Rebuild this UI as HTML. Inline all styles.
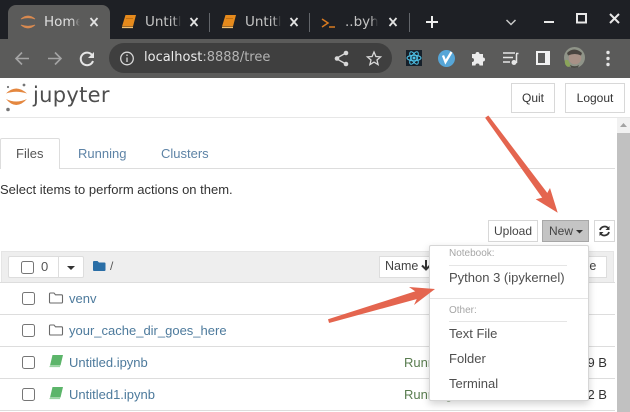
<!DOCTYPE html>
<html>
<head>
<meta charset="utf-8">
<style>
html,body{margin:0;padding:0;background:#fff;}
body{width:630px;height:412px;overflow:hidden;position:relative;font-family:"Liberation Sans",sans-serif;}
#w{position:absolute;left:0;top:0;width:630px;height:412px;overflow:hidden;filter:blur(.3px);background:#fff;}
.a{position:absolute;white-space:nowrap;}
.b{position:absolute;box-sizing:border-box;}
.btn{position:absolute;box-sizing:border-box;border:1px solid #d8d8d8;background:#fff;color:#333;font-size:12px;text-align:center;}
.cb{position:absolute;box-sizing:border-box;width:13px;height:13px;border:1px solid #767676;border-radius:2.5px;background:#fff;}
.lnk{color:#4d7a9c;font-size:13px;}
.hr{position:absolute;left:0;width:615px;height:1px;background:#ddd;}
.mi{position:absolute;left:449px;color:#4f4f4f;font-size:13px;white-space:nowrap;}
.mh{position:absolute;left:449px;color:#a6a6a6;font-size:10px;white-space:nowrap;}
.tt{font-family:'DejaVu Sans',sans-serif;font-size:13.5px;top:14px;width:36px;overflow:hidden;color:#c4c4c4;-webkit-mask-image:linear-gradient(90deg,#000 78%,transparent 100%);mask-image:linear-gradient(90deg,#000 78%,transparent 100%);}
svg{position:absolute;overflow:visible;}
</style>
</head>
<body>
<div id="w">
<!-- browser chrome -->
<div class="b" style="left:0;top:0;width:630px;height:39px;background:#1e2025;"></div>
<div class="b" style="left:0;top:39px;width:630px;height:39px;background:#5b5b5a;"></div>
<div class="b" style="left:8px;top:5px;width:102px;height:36px;background:#5b5b5a;border-radius:8px 8px 0 0;"></div>

<svg style="left:0;top:0" width="630" height="78" viewBox="0 0 630 78">
  <path d="M21 19Q28 13 35 19Q28 16.500 21 19Z" fill="#d98a50" stroke="#d98a50" stroke-width=".8"/>
  <path d="M21 25Q28 31 35 25Q28 27.500 21 25Z" fill="#d98a50" stroke="#d98a50" stroke-width=".8"/>
  <g stroke="#e2e2e2" stroke-width="1.800" fill="none">
    <path d="M90.500 18l7 8M97.500 18l-7 8"/>
    <path d="M190.500 18l7 8M197.500 18l-7 8"/>
    <path d="M290.500 18l7 8M297.500 18l-7 8"/>
    <path d="M389.500 18l7 8M396.500 18l-7 8"/>
  </g>
  <path d="M209.500 13v19M309.500 13v19M409.500 13v19" stroke="#62656a" stroke-width="1"/>
  <g fill="#e68a1c">
    <path d="M125.500 15h10.500l-3 11.500h-11z"/>
    <path d="M225.500 15h10.500l-3 11.500h-11z"/>
  </g>
  <path d="M122 27.500h11M222 27.500h11" stroke="#f4c070" stroke-width="1.200"/>
  <path d="M126 18.500h7M226 18.500h7" stroke="#b86a10" stroke-width=".8"/>
  <path d="M322 19l6 4-6 4M329 27h6" fill="none" stroke="#d97a20" stroke-width="1.500"/>
  <path d="M426 22h12M432 16v12" stroke="#eee" stroke-width="2" fill="none"/>
  <path d="M506.500 20l4.500 4.500 4.500-4.500" stroke="#c8c8c8" stroke-width="1.500" fill="none"/>
  <path d="M544 22h10" stroke="#e8e8e8" stroke-width="2"/>
  <rect x="577" y="14" width="9" height="8.500" fill="none" stroke="#e8e8e8" stroke-width="2"/>
  <path d="M610 14l9 9M619 14l-9 9" stroke="#e8e8e8" stroke-width="2"/>
  <!-- nav -->
  <path d="M29 58.500H16M22 52.500l-6 6 6 6" fill="none" stroke="#a4a4a4" stroke-width="1.600"/>
  <path d="M48 58.500H61M55 52.500l6 6-6 6" fill="none" stroke="#a4a4a4" stroke-width="1.600"/>
  <path d="M92 55A6.300 6.300 0 1 0 93 61" fill="none" stroke="#e6e6e6" stroke-width="2"/>
  <path d="M94 52v6h-6z" fill="#e6e6e6"/>
  <!-- address bar -->
  <rect x="109" y="43" width="283" height="30" rx="15" fill="#3f3f3f"/>
  <circle cx="127" cy="58.500" r="6.300" fill="none" stroke="#d8d8d8" stroke-width="1.300"/>
  <path d="M127 57.500v4.500M127 54.500v1.500" stroke="#d8d8d8" stroke-width="1.300"/>
  <!-- share / star -->
  <g fill="none" stroke="#d8d8d8" stroke-width="1.300">
    <path d="M346 53l-10 5.500 10 5.500"/>
    <path d="M374 52l1.900 4.500 4.700.4-3.600 3.100 1.100 4.600-4.100-2.500-4.100 2.500 1.100-4.600-3.600-3.100 4.700-.4z"/>
  </g>
  <g fill="#d8d8d8"><circle cx="346" cy="53" r="2.300"/><circle cx="337" cy="58.500" r="2.300"/><circle cx="346" cy="64" r="2.300"/></g>
  <!-- react ext -->
  <rect x="406" y="50" width="16" height="16" fill="#16202a"/>
  <g fill="none" stroke="#4fc3e8" stroke-width="1">
    <ellipse cx="414" cy="58" rx="7" ry="2.800"/>
    <ellipse cx="414" cy="58" rx="7" ry="2.800" transform="rotate(60 414 58)"/>
    <ellipse cx="414" cy="58" rx="7" ry="2.800" transform="rotate(120 414 58)"/>
  </g>
  <circle cx="414" cy="58" r="1.500" fill="#4fc3e8"/>
  <!-- v ext -->
  <circle cx="446.500" cy="58.500" r="8.500" fill="#56a6d8"/>
  <path d="M443 55.500l2.500 6.500 6-10" fill="none" stroke="#fff" stroke-width="2.300"/>
  <!-- puzzle -->
  <path d="M472 54h3.500a2 2 0 1 1 4 0H483v3.500a2 2 0 1 1 0 4V65.500h-3.500a2 2 0 1 0-4 0h-3.500v-3.500a2 2 0 1 0 0-4z" fill="#ececec"/>
  <!-- playlist -->
  <path d="M503 53h12M503 57.500h10M503 62h7" stroke="#e6e6e6" stroke-width="1.500"/>
  <path d="M516.500 54v9" stroke="#e6e6e6" stroke-width="1.500"/>
  <path d="M516 53.500h2.500" stroke="#e6e6e6" stroke-width="1.500"/>
  <circle cx="514" cy="62.500" r="2.500" fill="#e6e6e6"/>
  <!-- sidebar -->
  <rect x="536" y="51" width="14" height="14" fill="#f2f2f2"/>
  <rect x="538" y="53" width="7" height="10" fill="#5b5b5a"/>
  <!-- avatar -->
  <circle cx="574.500" cy="57.500" r="10.500" fill="#8f9488"/>
  <circle cx="575" cy="58" r="6.300" fill="#a89186"/>
  <path d="M567 53q7-7 15 0l-1 2.500q-6-3-13 0z" fill="#4a4540"/>
  <path d="M565 60q-1 5 3 7l3-1-3-6z" fill="#8ba55a"/>
  <path d="M570 65q5 2.500 9 0l-1 2.500q-4 1-7 0z" fill="#4b4b45"/>
  <!-- menu dots -->
  <g fill="#e6e6e6"><circle cx="608" cy="52.500" r="1.700"/><circle cx="608" cy="58.500" r="1.700"/><circle cx="608" cy="64.500" r="1.700"/></g>
</svg>

<div class="a tt" style="left:44px;color:#dfdfdf;">Home</div>
<div class="a tt" style="left:145px;">Untitled</div>
<div class="a tt" style="left:245px;">Untitled</div>
<div class="a tt" style="left:345px;width:33px;">..byhelp</div>
<div class="a" style="left:144px;top:50px;font-size:13px;color:#ececec;font-family:'DejaVu Sans',sans-serif;">localhost<span style="color:#b4b4b4">:8888/tree</span></div>

<!-- jupyter header -->
<svg style="left:0;top:78px" width="40" height="36" viewBox="0 0 40 36">
  <path d="M6 15.500Q16 5.500 27 15.500Q16 12 6 15.500Z" fill="#e4873f"/>
  <path d="M6 21Q16 33 27 21Q16 26 6 21Z" fill="#e4873f"/>
  <circle cx="24" cy="7" r="1.400" fill="#767677"/>
  <circle cx="8" cy="9" r="1.100" fill="#767677"/>
  <circle cx="8" cy="31.500" r="1.800" fill="#767677"/>
</svg>
<div class="a" style="left:33px;top:83px;color:#4e4e4e;font-family:'DejaVu Sans',sans-serif;font-size:21px;letter-spacing:.3px;">jupyter</div>
<div class="btn" style="left:511px;top:83px;width:44px;height:30px;line-height:28px;">Quit</div>
<div class="btn" style="left:565px;top:83px;width:60px;height:30px;line-height:28px;">Logout</div>
<div class="b" style="left:0;top:117px;width:630px;height:1px;background:#e7e7e7;"></div>

<!-- scrollbar -->
<div class="b" style="left:617px;top:118px;width:13px;height:294px;background:#f1f1f1;"></div>
<div class="b" style="left:617px;top:133px;width:13px;height:279px;background:#c1c1c1;"></div>
<svg style="left:617px;top:118px" width="13" height="15"><path d="M3 9l3.500-4 3.500 4z" fill="#a3a3a3"/></svg>

<!-- tabs -->
<div class="b" style="left:0;top:168px;width:615px;height:1px;background:#ddd;"></div>
<div class="b" style="left:0;top:138px;width:60px;height:31px;background:#fff;border:1px solid #ddd;border-bottom:0;border-radius:2px 2px 0 0;"></div>
<div class="a" style="left:16px;top:146px;font-size:13px;color:#555;">Files</div>
<div class="a" style="left:78px;top:146px;font-size:13px;color:#5d83a6;">Running</div>
<div class="a" style="left:161px;top:146px;font-size:13px;color:#5d83a6;">Clusters</div>

<div class="a" style="left:0;top:182px;font-size:13px;color:#333;">Select items to perform actions on them.</div>

<!-- buttons -->
<div class="btn" style="left:488px;top:220px;width:50px;height:22px;line-height:20px;color:#444;">Upload</div>
<div class="btn" style="left:542px;top:220px;width:47px;height:22px;line-height:20px;background:#c4c4c4;border-color:#a8a8a8;color:#444;text-align:left;padding-left:6px;">New</div>
<svg style="left:0;top:0" width="630" height="412"><path d="M576 230h7l-3.500 3.500z" fill="#333"/></svg>
<div class="btn" style="left:594px;top:220px;width:21px;height:22px;"></div>
<svg style="left:594px;top:220px" width="22" height="22" viewBox="0 0 22 22">
  <path d="M6 10A4.800 4.800 0 0 1 14.500 8.500M15 12A4.800 4.800 0 0 1 6.500 13.500" fill="none" stroke="#333" stroke-width="1.800"/>
  <path d="M15.500 6v4h-4zM5.500 16v-4h4z" fill="#333"/>
</svg>

<!-- list header -->
<div class="b" style="left:1px;top:251px;width:613px;height:32px;background:#eee;border:1px solid #e5e5e5;border-bottom:1px solid #ddd;"></div>
<div class="b" style="left:8px;top:256px;width:76px;height:22px;background:#fff;border:1px solid #ddd;border-radius:2px;"></div>
<div class="b" style="left:58px;top:256px;width:1px;height:22px;background:#ddd;"></div>
<div class="cb" style="left:21px;top:261px;"></div>
<div class="a" style="left:41px;top:259px;font-size:13px;color:#555;">0</div>
<svg style="left:0;top:0" width="630" height="412">
  <path d="M67 266h8l-4 4z" fill="#333"/>
  <path d="M93 262a1 1 0 0 1 1-1h3.500l1.500 1.500h5.500a1 1 0 0 1 1 1V270a1 1 0 0 1-1 1H94a1 1 0 0 1-1-1z" fill="#2a6ea6"/>
</svg>
<div class="a" style="left:110px;top:259px;font-size:12px;color:#555;">/</div>

<div class="b" style="left:379px;top:256px;width:60px;height:22px;background:#fff;border:1px solid #ddd;"></div>
<div class="a" style="left:385px;top:259px;font-size:12.500px;color:#444;">Name</div>
<svg style="left:420px;top:259px" width="12" height="14"><path d="M6 1v9M2 6.500l4 4 4-4" fill="none" stroke="#333" stroke-width="2"/></svg>
<div class="b" style="left:565px;top:256px;width:42px;height:22px;background:#fff;border:1px solid #ddd;"></div>
<div class="a" style="left:572px;top:259px;font-size:12.500px;color:#444;">Size</div>

<!-- rows -->
<div class="hr" style="top:282px;"></div>
<div class="hr" style="top:314px;"></div>
<div class="hr" style="top:346px;"></div>
<div class="hr" style="top:378px;"></div>
<div class="hr" style="top:410px;"></div>
<div class="cb" style="left:22px;top:292px;"></div>
<div class="cb" style="left:22px;top:324px;"></div>
<div class="cb" style="left:22px;top:356px;"></div>
<div class="cb" style="left:22px;top:388px;"></div>
<svg style="left:0;top:0" width="630" height="412">
  <g fill="none" stroke="#6a6a6a" stroke-width="1.100">
    <path d="M49.500 294a1 1 0 0 1 1-1h3.500l1.500 1.800h6a1 1 0 0 1 1 1V302a1 1 0 0 1-1 1h-11a1 1 0 0 1-1-1z"/>
    <path d="M49.500 326a1 1 0 0 1 1-1h3.500l1.500 1.800h6a1 1 0 0 1 1 1V334a1 1 0 0 1-1 1h-11a1 1 0 0 1-1-1z"/>
  </g>
  <g fill="#5cb56a">
    <path d="M52.500 355h10.500l-2.500 10.500H50z"/>
    <path d="M52.500 387h10.500l-2.500 10.500H50z"/>
  </g>
  <path d="M49.500 366.500h10.500M49.500 398.500h10.500" stroke="#9ad4a2" stroke-width="1.200"/>
</svg>
<div class="a lnk" style="left:69px;top:291px;">venv</div>
<div class="a lnk" style="left:69px;top:323px;">your_cache_dir_goes_here</div>
<div class="a lnk" style="left:69px;top:355px;">Untitled.ipynb</div>
<div class="a lnk" style="left:69px;top:387px;">Untitled1.ipynb</div>
<div class="a" style="left:404px;top:355px;font-size:13px;color:#5a7d50;">Running</div>
<div class="a" style="left:404px;top:387px;font-size:13px;color:#5a7d50;">Running</div>
<div class="a" style="left:573px;top:355px;font-size:13px;color:#333;">349 B</div>
<div class="a" style="left:573px;top:387px;font-size:13px;color:#333;">552 B</div>

<!-- dropdown -->
<div class="b" style="left:429px;top:245px;width:160px;height:156px;background:#fff;border:1px solid #d6d6d6;border-radius:2px;box-shadow:0 3px 8px rgba(0,0,0,.18);"></div>
<div class="mh" style="top:248px;">Notebook:</div>
<div class="b" style="left:449px;top:265px;width:118px;height:1px;background:#e5e5e5;"></div>
<div class="mi" style="top:270px;">Python 3 (ipykernel)</div>
<div class="b" style="left:430px;top:298px;width:158px;height:1px;background:#e5e5e5;"></div>
<div class="mh" style="top:305px;">Other:</div>
<div class="b" style="left:449px;top:321px;width:118px;height:1px;background:#e5e5e5;"></div>
<div class="mi" style="top:326px;">Text File</div>
<div class="mi" style="top:351px;">Folder</div>
<div class="mi" style="top:376px;">Terminal</div>

<!-- arrows -->
<svg style="left:0;top:0" width="630" height="412">
  <path d="M488.200 116.100L485.800 117.900L543.600 198.800L548.400 195.200Z" fill="#e4654f" stroke="#e4654f" stroke-linejoin="round"/>
  <path d="M557.700 212.700L535.700 199.300L545 197L550 188Z" fill="#e4654f"/>
  <path d="M328.600 319.600L329.400 322.400L421 297.400L419 290.600Z" fill="#e4654f" stroke="#e4654f" stroke-linejoin="round"/>
  <path d="M435 289L409 287L419 294L414 305Z" fill="#e4654f"/>
</svg>
</div>
</body>
</html>
